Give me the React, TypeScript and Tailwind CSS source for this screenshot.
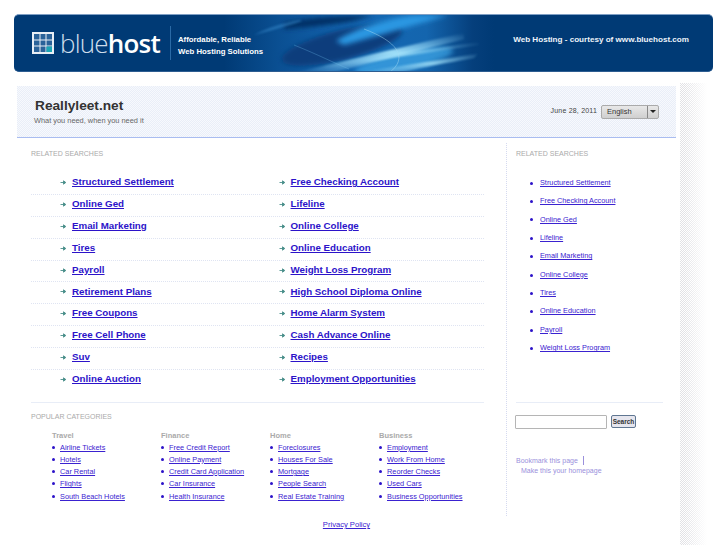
const leftLinks = [
    ['Structured Settlement', 'Free Checking Account'],
    ['Online Ged', 'Lifeline'],
    ['Email Marketing', 'Online College'],
    ['Tires', 'Online Education'],
    ['Payroll', 'Weight Loss Program'],
    ['Retirement Plans', 'High School Diploma Online'],
    ['Free Coupons', 'Home Alarm System'],
    ['Free Cell Phone', 'Cash Advance Online'],
    ['Suv', 'Recipes'],
    ['Online Auction', 'Employment Opportunities'],
];

const sideLinks = [
    'Structured Settlement',
    'Free Checking Account',
    'Online Ged',
    'Lifeline',
    'Email Marketing',
    'Online College',
    'Tires',
    'Online Education',
    'Payroll',
    'Weight Loss Program',
];

const categories = [
    { title: 'Travel', items: ['Airline Tickets', 'Hotels', 'Car Rental', 'Flights', 'South Beach Hotels'] },
    { title: 'Finance', items: ['Free Credit Report', 'Online Payment', 'Credit Card Application', 'Car Insurance', 'Health Insurance'] },
    { title: 'Home', items: ['Foreclosures', 'Houses For Sale', 'Mortgage', 'People Search', 'Real Estate Training'] },
    { title: 'Business', items: ['Employment', 'Work From Home', 'Reorder Checks', 'Used Cars', 'Business Opportunities'] },
];

function Swoosh() {
    return (
        <svg className="absolute left-[210px] top-0 h-[58px] w-[270px]" viewBox="0 0 270 58" preserveAspectRatio="none">
            <defs>
                <linearGradient id="sky" x1="0" x2="1" y1="0" y2="0">
                    <stop offset="0" stopColor="#003a75" />
                    <stop offset="0.2" stopColor="#0a4f92" />
                    <stop offset="0.5" stopColor="#1468b4" />
                    <stop offset="0.75" stopColor="#1465ae" />
                    <stop offset="0.92" stopColor="#053f7c" />
                    <stop offset="1" stopColor="#003a75" />
                </linearGradient>
                <linearGradient id="beam" x1="0" x2="1" y1="1" y2="0">
                    <stop offset="0" stopColor="#8fd4f7" stopOpacity="0" />
                    <stop offset="0.55" stopColor="#a6e4fb" stopOpacity="0.95" />
                    <stop offset="1" stopColor="#8fd4f7" stopOpacity="0" />
                </linearGradient>
                <filter id="soft" x="-20%" y="-50%" width="140%" height="200%">
                    <feGaussianBlur stdDeviation="2.5" />
                </filter>
                <filter id="softer" x="-20%" y="-50%" width="140%" height="200%">
                    <feGaussianBlur stdDeviation="0.8" />
                </filter>
            </defs>
            <rect width="270" height="58" fill="url(#sky)" />
            <ellipse cx="118" cy="30" rx="62" ry="15" fill="#0a3c7c" filter="url(#soft)" transform="rotate(-14 118 30)" />
            <path d="M60 8 C90 2 120 0 150 0 L130 6 C105 10 85 12 60 14 Z" fill="#062f63" filter="url(#soft)" />
            <path d="M112 26 C130 14 160 4 190 0 L225 0 C190 10 150 22 120 30 Z" fill="#2c97e2" filter="url(#soft)" />
            <ellipse cx="180" cy="46" rx="50" ry="9" fill="#3fa9e8" opacity="0.7" filter="url(#soft)" transform="rotate(-12 180 46)" />
            <path d="M30 20 C45 12 60 8 75 5 L78 6 C60 12 45 16 30 20 Z" fill="#3b8fd0" opacity="0.5" filter="url(#softer)" />
            <path d="M70 58 C120 46 170 34 240 18 L240 24 C180 40 130 52 105 58 Z" fill="url(#beam)" filter="url(#softer)" />
            <path d="M100 50 C150 42 200 34 255 27 L255 30 C200 38 150 46 100 54 Z" fill="url(#beam)" opacity="0.7" filter="url(#softer)" />
            <path d="M130 58 C170 52 210 46 255 38 L250 43 C210 50 190 54 175 58 Z" fill="url(#beam)" opacity="0.85" filter="url(#softer)" />
            <path d="M70 30 C95 40 110 48 125 54" fill="none" stroke="#6fc0ee" strokeOpacity="0.3" />
            <path d="M140 14 C172 26 186 42 165 58" fill="none" stroke="#a9dcf5" strokeOpacity="0.45" />
        </svg>
    );
}

function Banner() {
    return (
        <div className="relative ml-[14px] flex h-[58px] w-[699px] items-center overflow-hidden rounded-[5px] border-t border-b border-t-[#7f9fc4] border-b-[#2d5d91] bg-[#003a75] text-white">
            <Swoosh />
            <div className="relative flex w-full items-center pl-[18px] pr-6">
                <svg width="22" height="22" viewBox="0 0 22 22" className="mr-[6px] shrink-0">
                    <rect x="0" y="0" width="22" height="22" fill="#e8eef5" />
                    <rect x="2" y="2" width="18" height="18" fill="#2a6299" />
                    <path d="M8 2V20M14 2V20M2 8H20M2 14H20" stroke="#e8eef5" strokeWidth="1" />
                    <rect x="14.5" y="14.5" width="5.5" height="5.5" fill="#1ba6b5" />
                </svg>
                <div className="font-['Open_Sans',sans-serif] text-[26px] leading-[30px] tracking-[-0.8px] text-[#cfdeec] font-light">
                    blue<span className="font-semibold text-white">host</span>
                </div>
                <div className="ml-[10px] h-[34px] w-px bg-[#2a6aa6]" />
                <div className="mt-[5px] ml-[7px] text-[7.8px] leading-[12px] font-bold">
                    <div>Affordable, Reliable</div>
                    <div>Web Hosting Solutions</div>
                </div>
                <div className="ml-auto mb-[6px] text-[8.1px] font-bold text-[#eef4fa]">
                    Web Hosting - courtesy of www.bluehost.com
                </div>
            </div>
        </div>
    );
}

function Header() {
    return (
        <div className="flex h-[52px] items-center border-b border-[#a9bcf0] bg-[image:conic-gradient(#f7f9fd_25%,#e9eef8_0_50%,#f7f9fd_0_75%,#e9eef8_0)] bg-[length:2px_2px] pl-[18px] pr-[17px]">
            <div>
                <h1 className="text-[13.7px] leading-[17px] font-bold text-[#333333]">Reallyleet.net</h1>
                <p className="-ml-px mt-[2px] text-[7.4px] leading-[10px] text-[#666666]">What you need, when you need it</p>
            </div>
            <div className="ml-auto flex items-center">
                <span className="mr-[4px] text-[7px] tracking-[0.2px] text-[#444444]">June 28, 2011</span>
                <div className="flex h-[14px] w-[58px] items-center rounded-[2px] border border-[#aaaaaa] bg-[linear-gradient(#e8e8e8,#cfcfcf)] text-[7.5px] text-[#333333]">
                    <span className="flex-1 pl-[5px]">English</span>
                    <span className="flex h-full w-[11px] items-center justify-center border-l border-[#888888]">
                        <span className="h-0 w-0 border-x-[3px] border-t-[3px] border-x-transparent border-t-[#222222]" />
                    </span>
                </div>
            </div>
        </div>
    );
}

function SectionLabel({ children }: { children: string }) {
    return <div className="text-[7px] leading-[10px] text-[#aaaaaa]">{children}</div>;
}

function TopLink({ label }: { label: string }) {
    return (
        <div className="flex w-[218.5px] items-center pl-[29px]">
            <svg width="7" height="7" viewBox="0 0 7 7" className="mr-[5px] shrink-0">
                <path d="M0.5 3.5H5M3.5 1.8L5.8 3.5L3.5 5.2Z" fill="#4a8f8a" stroke="#4a8f8a" strokeWidth="0.9" />
            </svg>
            <a className="text-[9.75px] font-bold text-[#2c13c9] underline decoration-[#2c13c9]">{label}</a>
        </div>
    );
}

function MainColumn() {
    return (
        <div className="w-[489px] pl-[14px] pr-[22px] pt-[11px]">
            <SectionLabel>RELATED SEARCHES</SectionLabel>
            <div className="mt-[14px]">
                {leftLinks.map(([a, b], i) => (
                    <div
                        key={a}
                        className={i < 9 ? 'flex h-[21.9px] items-center border-b border-dotted border-[#dfe4f2] pb-[2px]' : 'flex h-[21.9px] items-center border-b border-transparent pb-[2px]'}
                    >
                        <TopLink label={a} />
                        <TopLink label={b} />
                    </div>
                ))}
            </div>
            <div className="mt-[10px] border-t border-[#e8edf7] pt-[9px]">
                <SectionLabel>POPULAR CATEGORIES</SectionLabel>
                <div className="mt-[9px] flex pl-[21px]">
                    {categories.map((c) => (
                        <div key={c.title} className="w-[109px] shrink-0">
                            <div className="text-[7.5px] leading-[10px] font-bold text-[#aaaaaa]">{c.title}</div>
                            <ul>
                                {c.items.map((item) => (
                                    <li key={item} className="flex h-[12.25px] items-center">
                                        <span className="mr-[5px] h-[3px] w-[3px] rounded-full bg-[#2c13c9]" />
                                        <a className="text-[7.35px] text-[#3a22d0] underline">{item}</a>
                                    </li>
                                ))}
                            </ul>
                        </div>
                    ))}
                </div>
            </div>
        </div>
    );
}

function Sidebar() {
    return (
        <div className="mt-[5px] h-[373px] w-[164px] border-l border-dotted border-[#d5daf0] pl-[9px] pr-[7px] pt-[6px]">
            <SectionLabel>RELATED SEARCHES</SectionLabel>
            <ul className="mt-[15px] pl-[14px]">
                {sideLinks.map((item) => (
                    <li key={item} className="flex h-[18.4px] items-center">
                        <span className="mr-[7px] h-[3px] w-[3px] rounded-full bg-[#2c13c9]" />
                        <a className="text-[7.3px] text-[#3a22d0] underline">{item}</a>
                    </li>
                ))}
            </ul>
            <div className="mt-[44px] border-t border-[#e8edf7] pt-[13px]">
                <div className="-mt-px -ml-px flex items-center">
                    <input className="h-[14px] w-[92px] rounded-[1px] border border-[#b5b5b5] bg-white" />
                    <button className="ml-[4px] h-[13px] w-[25px] rounded-[2px] border border-[#5f7691] bg-[#e6e6ee] text-[6.5px] leading-[11px] font-bold text-[#333333]">
                        Search
                    </button>
                </div>
                <div className="mt-[27px] text-[7px] leading-[10px] text-[#9a90dc]">
                    <div className="flex items-center">
                        Bookmark this page
                        <span className="ml-[5px] h-[9px] w-px bg-[#9a90dc]" />
                    </div>
                    <div className="pl-[5px]">Make this your homepage</div>
                </div>
            </div>
        </div>
    );
}

export default function App() {
    return (
        <div className="relative h-[545px] w-[727px] overflow-hidden bg-white pt-[14px] font-['Liberation_Sans',Arial,sans-serif]">
            <Banner />
            <div className="mt-[14px] flex">
                <div className="ml-[17px] w-[659px]">
                    <Header />
                    <div className="flex">
                        <MainColumn />
                        <Sidebar />
                    </div>
                    <div className="mt-[3px] text-center text-[7.6px] text-[#3a22d0] underline">Privacy Policy</div>
                </div>
                {/* speckled strip on the right, fades out to white */}
                <div className="ml-[4px] -mt-[3px] h-[462px] w-[30px] bg-[image:conic-gradient(#ffffff_25%,#e2e2e6_0_50%,#ffffff_0_75%,#e2e2e6_0)] bg-[length:2px_2px] [mask-image:linear-gradient(to_right,#000_15%,transparent_90%)]" />
            </div>
        </div>
    );
}
